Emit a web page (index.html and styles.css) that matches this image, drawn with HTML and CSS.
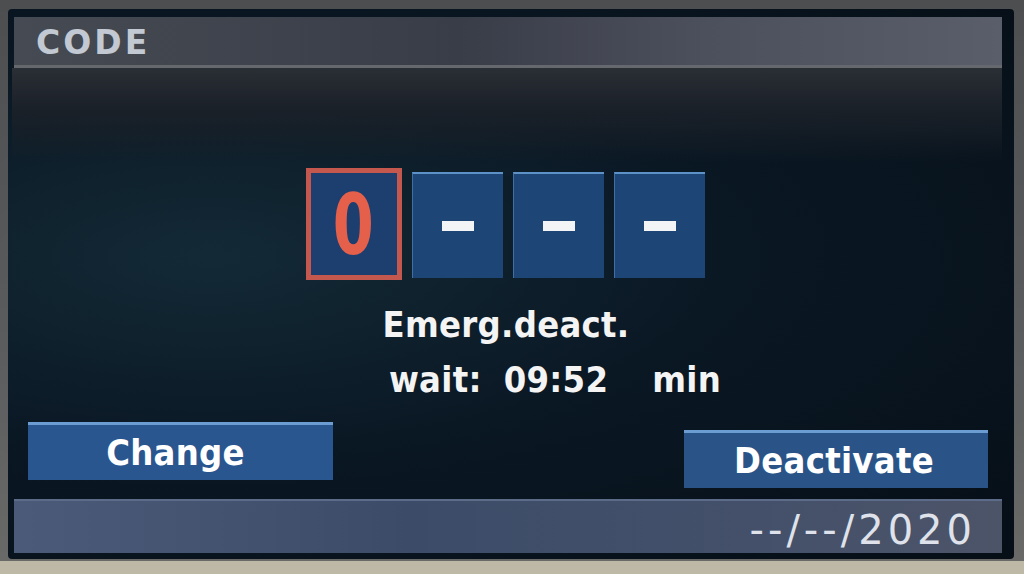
FILE: index.html
```html
<!DOCTYPE html>
<html>
<head>
<meta charset="utf-8">
<link rel="stylesheet" href="styles.css">
</head>
<body>
<div class="bezel">
  <div class="screen">
    <div class="header"><span class="title">CODE</span></div>
    <div class="main">
      <div class="codes">
        <div class="digit active"><span class="zero">0</span></div>
        <div class="digit"><span class="dash"></span></div>
        <div class="digit"><span class="dash"></span></div>
        <div class="digit"><span class="dash"></span></div>
      </div>
      <div class="msg">Emerg.deact.</div>
      <div class="wait"><span>wait:</span><span class="time">09:52</span><span>min</span></div>
      <div class="buttons">
        <div class="btn btn-change">Change</div>
        <div class="btn btn-deact">Deactivate</div>
      </div>
    </div>
    <div class="footer"><span class="date">--/--/2020</span></div>
  </div>
  <div class="sill"></div>
</div>
</body>
</html>
```
FILE: styles.css
```css
html, body {
  margin: 0;
  padding: 0;
  width: 1024px;
  height: 574px;
  overflow: hidden;
  background: #545658;
  font-family: "DejaVu Sans", "Liberation Sans", sans-serif;
}
.bezel {
  width: 1024px;
  height: 574px;
  display: flex;
  flex-direction: column;
  background: linear-gradient(180deg, #4c4e50 0%, #5a5c5e 60%, #6a6b68 100%);
}
.screen {
  margin: 9px 10px 0 8px;
  height: 550px;
  border-radius: 4px;
  background: radial-gradient(ellipse at 20% 45%, #132a36 0%, #0a1824 45%, #060e16 100%);
  display: flex;
  flex-direction: column;
  padding: 8px 12px 6px 4px;
  box-sizing: border-box;
}
.header {
  height: 48px;
  margin-left: 2px;
  background: linear-gradient(90deg, #464a52 0%, #393d48 45%, #4c4f5c 70%, #5a5d6a 100%);
  border-bottom: 3px solid #65686c;
  display: flex;
  align-items: center;
  padding-left: 22px;
}
.title {
  color: #c2c9d2;
  font-size: 33px;
  font-weight: bold;
  letter-spacing: 3px;
  padding-top: 2px;
}
.main {
  flex: 1;
  display: flex;
  flex-direction: column;
  align-items: center;
  background: linear-gradient(180deg, #2a2e35 0%, #1a2028 10%, rgba(10,20,30,0) 22%);
}
.codes {
  display: flex;
  gap: 10px;
  margin-top: 100px;
  margin-left: -4px;
}
.digit {
  width: 90px;
  height: 104px;
  background: #1d4676;
  border-top: 2px solid #5c92c8;
  border-left: 1px solid #3f6fa4;
  display: flex;
  align-items: center;
  justify-content: center;
  margin-top: 4px;
}
.digit.active {
  width: 86px;
  height: 102px;
  margin-top: 0;
  background: #1c3f70;
  border: 5px solid #c4584e;
}
.zero {
  color: #e4604a;
  font-size: 84px;
  font-weight: bold;
  font-family: "DejaVu Sans Condensed", "DejaVu Sans", sans-serif;
  line-height: 1;
  display: inline-block;
  transform: scaleX(0.78);
  margin-top: 2px;
}
.dash {
  width: 32px;
  height: 10px;
  background: #f2f4f6;
}
.msg {
  color: #f4f4f4;
  font-size: 36px;
  font-weight: bold;
  font-family: "DejaVu Sans Condensed", "DejaVu Sans", sans-serif;
  margin-top: 24px;
  margin-left: -2px;
  letter-spacing: 0.3px;
}
.wait {
  color: #f4f4f4;
  font-size: 36px;
  font-weight: bold;
  font-family: "DejaVu Sans Condensed", "DejaVu Sans", sans-serif;
  margin-top: 14px;
  margin-left: 96px;
  display: flex;
  gap: 22px;
  letter-spacing: 0.3px;
}
.wait .time {
  margin-right: 22px;
}
.buttons {
  align-self: stretch;
  display: flex;
  justify-content: space-between;
  align-items: flex-start;
  margin-top: 22px;
  padding-left: 16px;
  padding-right: 14px;
}
.btn {
  width: 305px;
  height: 58px;
  background: #2a5690;
  border-top: 3px solid #6b9cd2;
  box-sizing: border-box;
  color: #ffffff;
  font-size: 36px;
  font-weight: bold;
  font-family: "DejaVu Sans Condensed", "DejaVu Sans", sans-serif;
  display: flex;
  align-items: center;
  justify-content: center;
  letter-spacing: 0.3px;
}
.btn-change {
  padding-right: 10px;
}
.btn-deact {
  margin-top: 8px;
  width: 304px;
  background: #2a5488;
  padding-right: 4px;
}
.footer {
  height: 52px;
  margin-left: 2px;
  background: linear-gradient(90deg, #4a5a78 0%, #3c4c68 40%, #44506a 75%, #4c5468 100%);
  border-top: 2px solid #5c6c88;
  display: flex;
  align-items: flex-end;
  justify-content: flex-end;
  padding-right: 26px;
}
.date {
  color: #dfe2ea;
  font-size: 40px;
  line-height: 46px;
  letter-spacing: 4px;
}
.sill {
  flex: 1;
  background: #bdb9a6;
  margin-top: 2px;
}
```
